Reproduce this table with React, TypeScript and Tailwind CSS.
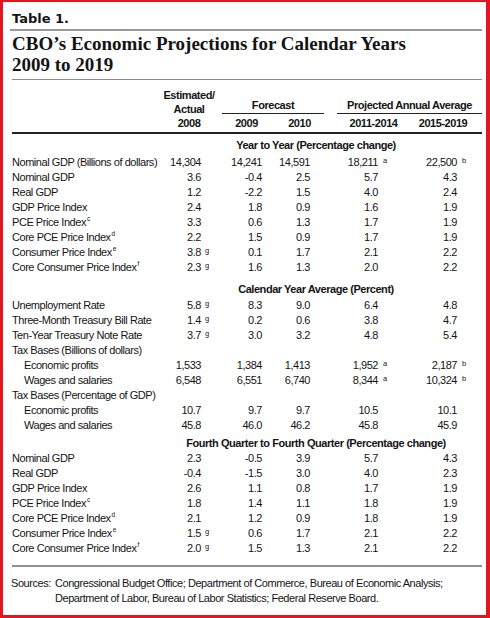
import React from "react";

type V = [string, string?];
type Row = { label: string; sup?: string; indent?: boolean; vals?: V[] };

const yearToYear: Row[] = [
  { label: "Nominal GDP (Billions of dollars)", vals: [["14,304"], ["14,241"], ["14,591"], ["18,211", "a"], ["22,500", "b"]] },
  { label: "Nominal GDP", vals: [["3.6"], ["-0.4"], ["2.5"], ["5.7"], ["4.3"]] },
  { label: "Real GDP", vals: [["1.2"], ["-2.2"], ["1.5"], ["4.0"], ["2.4"]] },
  { label: "GDP Price Index", vals: [["2.4"], ["1.8"], ["0.9"], ["1.6"], ["1.9"]] },
  { label: "PCE Price Index", sup: "c", vals: [["3.3"], ["0.6"], ["1.3"], ["1.7"], ["1.9"]] },
  { label: "Core PCE Price Index", sup: "d", vals: [["2.2"], ["1.5"], ["0.9"], ["1.7"], ["1.9"]] },
  { label: "Consumer Price Index", sup: "e", vals: [["3.8", "g"], ["0.1"], ["1.7"], ["2.1"], ["2.2"]] },
  { label: "Core Consumer Price Index", sup: "f", vals: [["2.3", "g"], ["1.6"], ["1.3"], ["2.0"], ["2.2"]] },
];

const calendar: Row[] = [
  { label: "Unemployment Rate", vals: [["5.8", "g"], ["8.3"], ["9.0"], ["6.4"], ["4.8"]] },
  { label: "Three-Month Treasury Bill Rate", vals: [["1.4", "g"], ["0.2"], ["0.6"], ["3.8"], ["4.7"]] },
  { label: "Ten-Year Treasury Note Rate", vals: [["3.7", "g"], ["3.0"], ["3.2"], ["4.8"], ["5.4"]] },
  { label: "Tax Bases (Billions of dollars)" },
  { label: "Economic profits", indent: true, vals: [["1,533"], ["1,384"], ["1,413"], ["1,952", "a"], ["2,187", "b"]] },
  { label: "Wages and salaries", indent: true, vals: [["6,548"], ["6,551"], ["6,740"], ["8,344", "a"], ["10,324", "b"]] },
  { label: "Tax Bases (Percentage of GDP)" },
  { label: "Economic profits", indent: true, vals: [["10.7"], ["9.7"], ["9.7"], ["10.5"], ["10.1"]] },
  { label: "Wages and salaries", indent: true, vals: [["45.8"], ["46.0"], ["46.2"], ["45.8"], ["45.9"]] },
];

const fourth: Row[] = [
  { label: "Nominal GDP", vals: [["2.3"], ["-0.5"], ["3.9"], ["5.7"], ["4.3"]] },
  { label: "Real GDP", vals: [["-0.4"], ["-1.5"], ["3.0"], ["4.0"], ["2.3"]] },
  { label: "GDP Price Index", vals: [["2.6"], ["1.1"], ["0.8"], ["1.7"], ["1.9"]] },
  { label: "PCE Price Index", sup: "c", vals: [["1.8"], ["1.4"], ["1.1"], ["1.8"], ["1.9"]] },
  { label: "Core PCE Price Index", sup: "d", vals: [["2.1"], ["1.2"], ["0.9"], ["1.8"], ["1.9"]] },
  { label: "Consumer Price Index", sup: "e", vals: [["1.5", "g"], ["0.6"], ["1.7"], ["2.1"], ["2.2"]] },
  { label: "Core Consumer Price Index", sup: "f", vals: [["2.0", "g"], ["1.5"], ["1.3"], ["2.1"], ["2.2"]] },
];

function FnCell({ v, slot }: { v?: V; slot: string }) {
  return (
    <div className="flex justify-end items-start">
      <span>{v ? v[0] : ""}</span>
      <span className={`${slot} text-[7.5px] leading-none pt-[2px] text-left tracking-normal`}>{v && v[1] ? v[1] : ""}</span>
    </div>
  );
}

function DataRow({ r }: { r: Row }) {
  return (
    <div className="grid grid-cols-[138px_61px_51px_48px_78px_79px_1fr] h-[15px] leading-[15px]">
      <div className={r.indent ? "pl-3 whitespace-nowrap" : "whitespace-nowrap"}>
        {r.label}
        {r.sup && <span className="text-[6.5px] leading-none align-top relative top-[1px] ml-[1px]">{r.sup}</span>}
      </div>
      <FnCell v={r.vals?.[0]} slot="w-[10px] pl-[4px]" />
      <div className="text-right">{r.vals?.[1]?.[0] ?? ""}</div>
      <div className="text-right">{r.vals?.[2]?.[0] ?? ""}</div>
      <FnCell v={r.vals?.[3]} slot="w-[10px] pl-[5px]" />
      <FnCell v={r.vals?.[4]} slot="w-[10px] pl-[5px]" />
      <div />
    </div>
  );
}

function SectionHead({ text, cls }: { text: string; cls: string }) {
  return (
    <div className={`grid grid-cols-[138px_1fr] leading-[15px] ${cls}`}>
      <div />
      <div className="text-center font-bold whitespace-nowrap">{text}</div>
    </div>
  );
}

export default function App() {
  return (
    <div className="w-[490px] h-[618px] bg-white border-[#e3161d] border-l-[3px] border-t-[2px] border-r-[4px] border-b-[3px] pl-[9px] pr-[4px] text-[#141414] overflow-hidden">
      <div className="pt-[9px] font-['DejaVu_Sans',sans-serif] font-bold text-[13px] leading-[16px]">Table 1.</div>
      <div className="mt-[2px] h-[2px] bg-[#9a9a9a] -ml-[2px]" />
      <div className="mt-[2px] font-['Liberation_Serif',serif] font-bold text-[19px] leading-[21px]">
        CBO’s Economic Projections for Calendar Years
        <br />
        2009 to 2019
      </div>
      <div className="mt-[4px] h-px bg-[#8c8c8c]" />

      <div className="font-['Liberation_Sans',sans-serif] text-[11px] tracking-[-0.45px]">
        <div className="mt-[8px] grid grid-cols-[148px_58px_106px_13px_145px] items-end font-bold leading-[14px]">
          <div />
          <div className="text-center">
            <div>Estimated/</div>
            <div>Actual</div>
            <div>2008</div>
          </div>
          <div className="flex flex-col">
            <div className="ml-[4px] text-center border-b-[1.5px] border-[#222] pb-[1px] whitespace-nowrap">Forecast</div>
            <div className="mt-[2px] grid grid-cols-[57px_49px]">
              <div className="text-center">2009</div>
              <div className="text-center">2010</div>
            </div>
          </div>
          <div />
          <div className="flex flex-col">
            <div className="text-center border-b-[1.5px] border-[#222] pb-[1px] whitespace-nowrap">Projected Annual Average</div>
            <div className="mt-[2px] grid grid-cols-[73px_66px_6px]">
              <div className="text-center">2011-2014</div>
              <div className="text-center">2015-2019</div>
              <div />
            </div>
          </div>
        </div>
        <div className="mt-[2px] h-[1.5px] bg-[#222]" />

        <SectionHead text="Year to Year (Percentage change)" cls="mt-[4px]" />
        <div className="mt-[2px]">
          {yearToYear.map((r, i) => (
            <DataRow key={i} r={r} />
          ))}
        </div>

        <SectionHead text="Calendar Year Average (Percent)" cls="mt-[7px]" />
        <div className="mt-[1.5px]">
          {calendar.map((r, i) => (
            <DataRow key={i} r={r} />
          ))}
        </div>

        <SectionHead text="Fourth Quarter to Fourth Quarter (Percentage change)" cls="mt-[2.5px]" />
        <div>
          {fourth.map((r, i) => (
            <DataRow key={i} r={r} />
          ))}
        </div>

        <div className="mt-[9.5px] h-[2px] bg-[#8f8f8f]" />

        <div className="mt-[8.5px] flex leading-[15px] -ml-[1px]">
          <div className="w-[44px] shrink-0">Sources:</div>
          <div className="whitespace-nowrap">
            Congressional Budget Office; Department of Commerce, Bureau of Economic Analysis;
            <br />
            Department of Labor, Bureau of Labor Statistics; Federal Reserve Board.
          </div>
        </div>
      </div>
    </div>
  );
}
